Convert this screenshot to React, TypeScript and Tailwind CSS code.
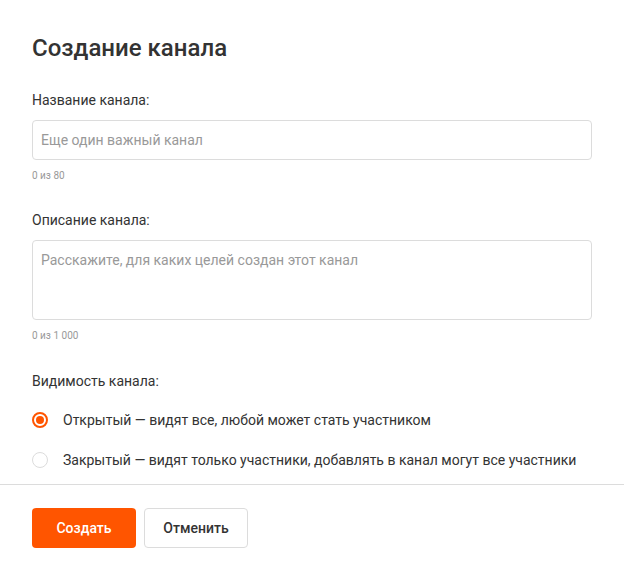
import React, { useState } from "react";

export default function App() {
  const [visibility, setVisibility] = useState<"open" | "closed">("open");

  return (
    <div
      className="w-[624px] h-[580px] bg-white text-[#333] overflow-hidden"
      style={{ fontFamily: "Roboto, 'Noto Sans', sans-serif" }}
    >
      <div className="px-8 pt-[32px]">
        <h1 className="text-[24px] leading-8 font-medium text-[#333]">Создание канала</h1>

        <div className="mt-[26px]">
          <label className="block text-[14px] leading-5">Название канала:</label>
          <input
            className="mt-[10px] w-[560px] h-10 border border-[#dcdcdc] rounded-[4px] px-[8px] text-[14px] placeholder:text-[#999] outline-none"
            placeholder="Еще один важный канал"
          />
          <div className="mt-[9px] text-[10px] leading-[14px] text-[#999]">0 из 80</div>
        </div>

        <div className="mt-[27px]">
          <label className="block text-[14px] leading-5">Описание канала:</label>
          <textarea
            className="mt-[10px] block w-[560px] h-20 border border-[#dcdcdc] rounded-[4px] px-[8px] py-[9px] text-[14px] leading-5 placeholder:text-[#999] outline-none resize-none"
            placeholder="Расскажите, для каких целей создан этот канал"
          />
          <div className="mt-[9px] text-[10px] leading-[14px] text-[#999]">0 из 1 000</div>
        </div>

        <div className="mt-[28px]">
          <div className="text-[14px] leading-5">Видимость канала:</div>
          <div className="mt-[19px] flex flex-col gap-5">
            <Radio
              checked={visibility === "open"}
              onClick={() => setVisibility("open")}
              label="Открытый — видят все, любой может стать участником"
            />
            <Radio
              checked={visibility === "closed"}
              onClick={() => setVisibility("closed")}
              label="Закрытый — видят только участники, добавлять в канал могут все участники"
            />
          </div>
        </div>
      </div>

      <div className="mt-[14px] border-t border-[#dcdcdc]" />

      <div className="px-8 pt-[23px] flex gap-2">
        <button className="w-[104px] h-10 rounded-[4px] bg-[#ff5500] text-white text-[14px] font-medium">
          Создать
        </button>
        <button className="w-[104px] h-10 rounded-[4px] border border-[#dcdcdc] bg-white text-[#333] text-[14px] font-medium">
          Отменить
        </button>
      </div>
    </div>
  );
}

function Radio({ checked, label, onClick }: { checked: boolean; label: string; onClick: () => void }) {
  return (
    <div className="flex items-center h-5 cursor-pointer" onClick={onClick}>
      <span
        className={
          checked
            ? "w-4 h-4 rounded-full border-2 border-[#ff5500] flex items-center justify-center"
            : "w-4 h-4 rounded-full border border-[#dcdcdc] flex items-center justify-center"
        }
      >
        {checked && <span className="w-2 h-2 rounded-full bg-[#ff5500]" />}
      </span>
      <span className="ml-[15px] text-[14px] leading-5">{label}</span>
    </div>
  );
}
